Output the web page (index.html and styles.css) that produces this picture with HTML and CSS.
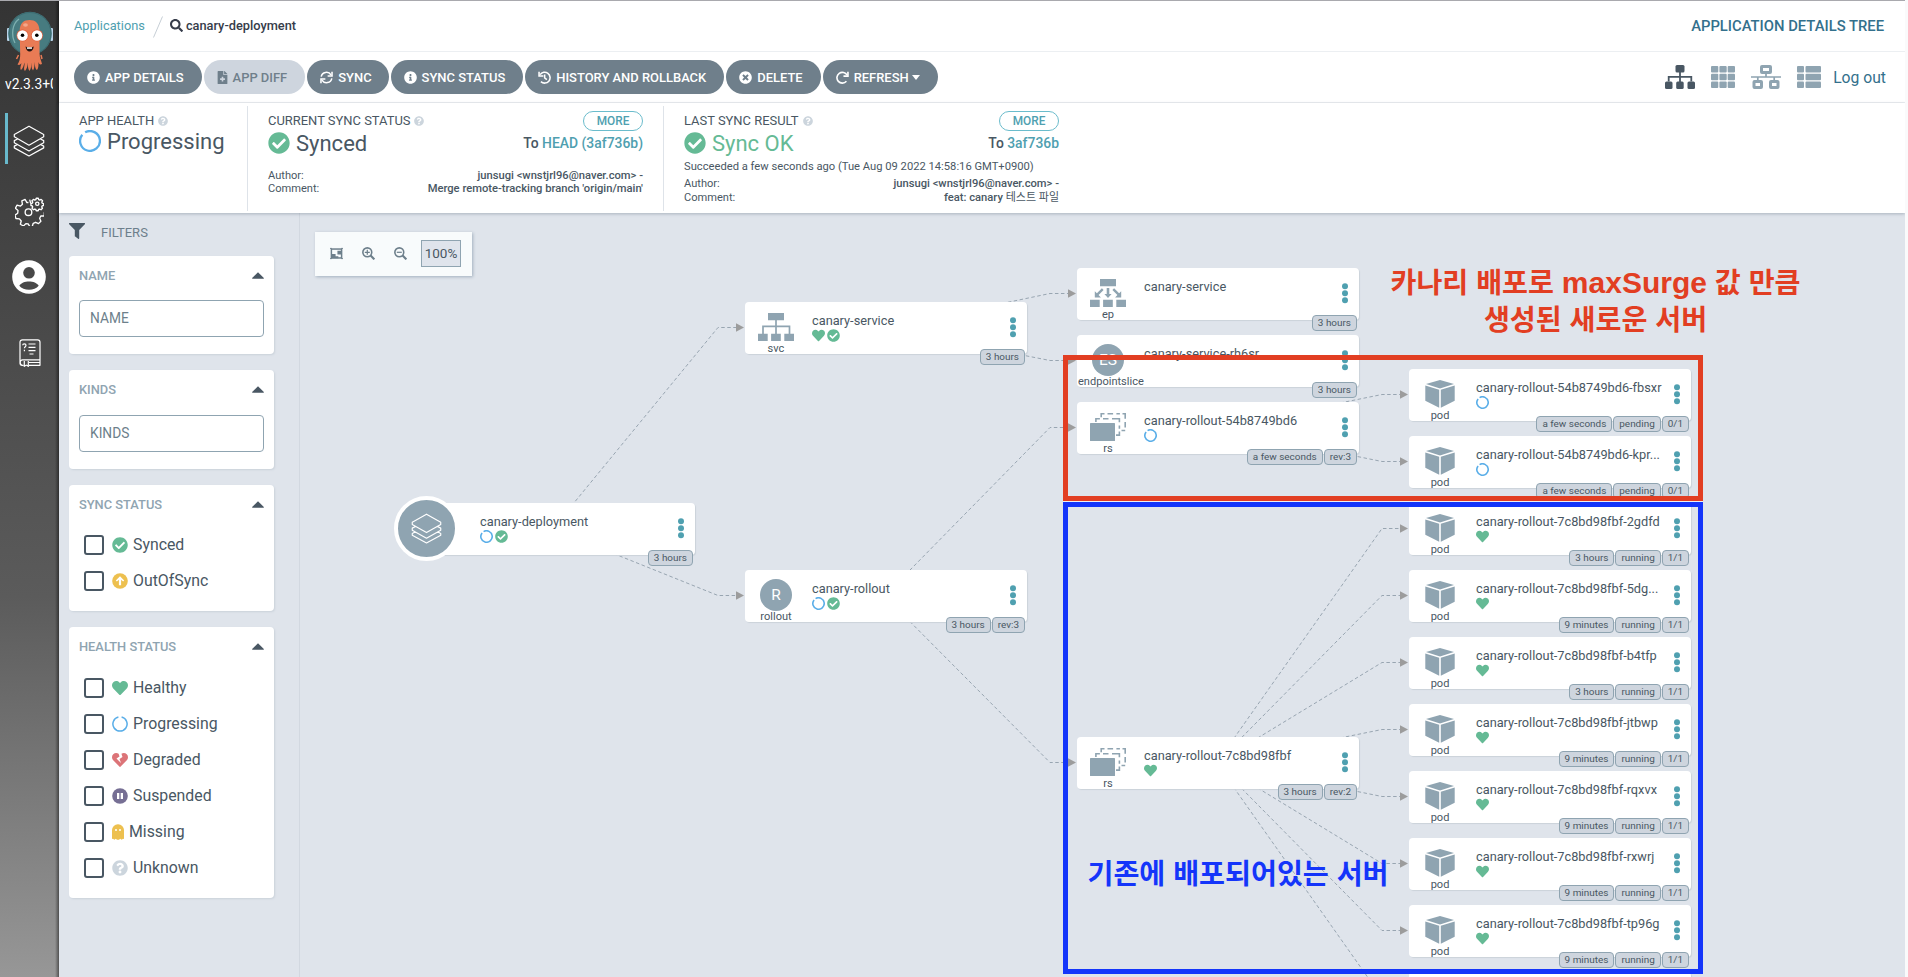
FILE: index.html
```html
<!DOCTYPE html>
<html lang="ko">
<head>
<meta charset="utf-8">
<title>canary-deployment - Application Details Tree</title>
<link rel="stylesheet" href="styles.css">
</head>
<body>
<svg class="defs" width="0" height="0" aria-hidden="true">
  <symbol id="check" viewBox="0 0 512 512"><path fill="currentColor" d="M504 256c0 136.967-111.033 248-248 248S8 392.967 8 256 119.033 8 256 8s248 111.033 248 248zM227.314 387.314l184-184c6.248-6.248 6.248-16.379 0-22.627l-22.627-22.627c-6.248-6.249-16.379-6.249-22.628 0L216 308.118l-70.059-70.059c-6.248-6.248-16.379-6.248-22.628 0l-22.627 22.627c-6.248 6.248-6.248 16.379 0 22.627l104 104c6.249 6.249 16.379 6.249 22.628.001z"/></symbol>
  <symbol id="heart" viewBox="0 0 512 512"><path fill="currentColor" d="M462.3 62.6C407.5 15.9 326 24.3 275.7 76.2L256 96.5l-19.7-20.3C186.1 24.3 104.5 15.9 49.7 62.6c-62.8 53.6-66.1 149.8-9.9 207.9l193.5 199.8c12.5 12.9 32.8 12.9 45.3 0l193.5-199.8c56.3-58.1 53-154.3-9.8-207.9z"/></symbol>
  <symbol id="broken" viewBox="0 0 512 512"><path fill="currentColor" d="M473.7 73.8l-2.4-2.5c-46-47-118-51.7-169.6-14.8L336 159.9l-96 64 48 128-144-144 96-64-28.6-86.5C159.7 19.6 87 24 40.7 71.4l-2.4 2.4C-10.4 123.6-12.5 202.9 31 256l212.1 218.6c7.1 7.3 18.6 7.3 25.7 0L481 255.9c43.5-53 41.4-132.3-7.3-182.1z"/></symbol>
  <symbol id="ring" viewBox="0 0 22 22"><path fill="none" stroke="currentColor" stroke-width="2.3" d="M6.6 2.1A9.9 9.9 0 1 1 3.6 4.4" transform="rotate(-3 11 11)"/></symbol>
  <symbol id="ring-top" viewBox="0 0 16 16"><path fill="none" stroke="currentColor" stroke-width="1.5" d="M9.6 1.1A7.1 7.1 0 1 1 6.4 1.1"/></symbol>
  <symbol id="ring-small" viewBox="0 0 13 13"><path fill="none" stroke="currentColor" stroke-width="1.6" d="M3.6 1.6A5.7 5.7 0 1 1 2.1 2.9"/></symbol>
  <symbol id="question" viewBox="0 0 512 512"><path fill="currentColor" d="M504 256c0 136.997-111.043 248-248 248S8 392.997 8 256C8 119.083 119.043 8 256 8s248 111.083 248 248zM262.655 90c-54.497 0-89.255 22.957-116.549 63.758-3.536 5.286-2.353 12.415 2.715 16.258l34.699 26.31c5.205 3.947 12.621 3.008 16.665-2.122 17.864-22.658 30.113-35.797 57.303-35.797 20.429 0 45.698 13.148 45.698 32.958 0 14.976-12.363 22.667-32.534 33.976C247.128 238.528 216 254.941 216 296v4c0 6.627 5.373 12 12 12h56c6.627 0 12-5.373 12-12v-1.333c0-28.462 83.186-29.647 83.186-106.667 0-58.002-60.165-102-116.531-102zM256 338c-25.365 0-46 20.635-46 46 0 25.364 20.635 46 46 46s46-20.636 46-46c0-25.365-20.635-46-46-46z"/></symbol>
  <symbol id="info" viewBox="0 0 512 512"><path fill="currentColor" d="M256 8C119.043 8 8 119.083 8 256c0 136.997 111.043 248 248 248s248-111.003 248-248C504 119.083 392.957 8 256 8zm0 110c23.196 0 42 18.804 42 42s-18.804 42-42 42-42-18.804-42-42 18.804-42 42-42zm56 254c0 6.627-5.373 12-12 12h-88c-6.627 0-12-5.373-12-12v-24c0-6.627 5.373-12 12-12h12v-64h-12c-6.627 0-12-5.373-12-12v-24c0-6.627 5.373-12 12-12h64c6.627 0 12 5.373 12 12v100h12c6.627 0 12 5.373 12 12v24z"/></symbol>
  <symbol id="times" viewBox="0 0 512 512"><path fill="currentColor" d="M256 8C119 8 8 119 8 256s111 248 248 248 248-111 248-248S393 8 256 8zm121.600 313.100c4.700 4.700 4.700 12.300 0 17L338 377.600c-4.700 4.700-12.300 4.700-17 0L256 312l-65.100 65.600c-4.700 4.700-12.300 4.700-17 0L134.400 338c-4.700-4.700-4.700-12.300 0-17l65.600-65-65.600-65.100c-4.700-4.700-4.700-12.300 0-17l39.600-39.600c4.700-4.700 12.300-4.700 17 0l65 65.700 65.100-65.600c4.700-4.700 12.300-4.700 17 0l39.600 39.600c4.700 4.700 4.700 12.300 0 17L312 256l65.600 65.100z"/></symbol>
  <symbol id="search" viewBox="0 0 512 512"><path fill="currentColor" d="M505 442.700L405.300 343c-4.500-4.500-10.600-7-17-7H372c27.600-35.300 44-79.700 44-128C416 93.100 322.900 0 208 0S0 93.100 0 208s93.100 208 208 208c48.300 0 92.700-16.400 128-44v16.300c0 6.400 2.500 12.500 7 17l99.700 99.700c9.400 9.400 24.600 9.400 33.900 0l28.300-28.300c9.400-9.400 9.400-24.600.1-34zM208 336c-70.700 0-128-57.200-128-128 0-70.700 57.200-128 128-128 70.700 0 128 57.200 128 128 0 70.700-57.200 128-128 128z"/></symbol>
  <symbol id="file" viewBox="-64 0 512 512"><path fill="currentColor" d="M377 105L279.100 7c-4.500-4.500-10.600-7-17-7H256v128h128v-6.100c0-6.300-2.500-12.400-7-16.900zm-153 31V0H24C10.700 0 0 10.700 0 24v464c0 13.300 10.700 24 24 24h336c13.300 0 24-10.700 24-24V160H248c-13.200 0-24-10.800-24-24zm64 160v48c0 4.400-3.600 8-8 8h-56v56c0 4.400-3.600 8-8 8h-48c-4.400 0-8-3.600-8-8v-56h-56c-4.400 0-8-3.600-8-8v-48c0-4.400 3.600-8 8-8h56v-56c0-4.400 3.600-8 8-8h48c4.400 0 8 3.600 8 8v56h56c4.400 0 8 3.600 8 8z"/></symbol>
  <symbol id="sync" viewBox="0 0 16 16"><g fill="none" stroke="currentColor" stroke-width="1.9"><path d="M1.500 7A6.500 6.500 0 0 1 13.500 4.800M14.500 9A6.500 6.500 0 0 1 2.500 11.200"/><path d="M14.800.8v5.400H9.400M1.200 15.200V9.800h5.400"/></g></symbol>
  <symbol id="history" viewBox="0 0 16 16"><g fill="none" stroke="currentColor" stroke-width="1.900"><path d="M2.600 4.500A6.700 6.700 0 1 1 3.600 13.100"/><path d="M1.300.8v5.300h5.300M8.200 4.300v4.200l2.700 2"/></g></symbol>
  <symbol id="redo" viewBox="0 0 16 16"><g fill="none" stroke="currentColor" stroke-width="2"><path d="M13.600 5.200A6.600 6.600 0 1 0 12.800 12.500"/><path d="M14.700.8v5.500H9.200"/></g></symbol>
  <symbol id="up" viewBox="0 0 16 16"><circle cx="8" cy="8" r="7.800" fill="currentColor"/><path fill="#fff" d="M8 3.300l4.200 4.200-1.100 1.100-2-1.800v5.400H6.900V6.800l-2 1.800-1.100-1.100z"/></symbol>
  <symbol id="pause" viewBox="0 0 16 16"><circle cx="8" cy="8" r="7.800" fill="currentColor"/><path fill="#fff" d="M5 5h2.300v6H5zM8.700 5H11v6H8.700z"/></symbol>
  <symbol id="ghost" viewBox="0 0 12 16"><path fill="currentColor" d="M6 .2a5.900 5.900 0 0 0-6 5.900v9l1-.3 1.300 1 1.500-1.100L5 15.800h2l1.200-1.100 1.500 1.100 1.300-1 1 .3v-9A5.900 5.900 0 0 0 6 .2z"/><circle cx="4" cy="6" r="1" fill="#fff"/><circle cx="8" cy="6" r="1" fill="#fff"/></symbol>
  <symbol id="layers" viewBox="0 0 32 32"><g fill="none" stroke="currentColor" stroke-width="1.200" stroke-linejoin="round"><path d="M16 1.200L30.700 9.600v2.200L16 20.200 1.300 11.800V9.600zM1.300 11v1M4.600 14l-3.300 1.600v2.200L16 26l14.700-8.200v-2.200L27.400 14M4.600 19.400l-3.300 1.700v1.800L16 31l14.700-8.100v-1.800l-3.300-1.700"/></g></symbol>
  <symbol id="caret" viewBox="0 0 12 7"><path fill="currentColor" d="M6 .2l5.600 5.500c.5.500.2 1.100-.4 1.100H.8c-.6 0-.9-.6-.4-1.100z"/></symbol>
  <symbol id="kind-svc" viewBox="0 0 36 28"><g fill="#8fa4b1"><path d="M10 0h16v7.300H10zM0 20.800h9.700V28H0zM13.100 20.800h9.700V28h-9.700zM26.300 20.800H36V28h-9.700z"/><path fill="none" stroke="#8fa4b1" stroke-width="1.700" d="M18 7v14M5 21v-7.600h26.500V21"/></g></symbol>
  <symbol id="kind-ep" viewBox="0 0 36 28"><g fill="#8fa4b1"><path d="M10 0h16v7.300H10zM0 20.800h9.700V28H0zM13.100 20.800h9.700V28h-9.700zM26.300 20.800H36V28h-9.700z"/><path d="M4.800 18.400v-6.200l2.100 2 5-4.900 1.700 1.700-5 4.900 2.300 2.500zM31.200 18.400v-6.200l-2.100 2-5-4.900-1.700 1.700 5 4.900-2.300 2.500zM18 19l-3.600-4h2.300V9h2.600v6h2.300z"/></g></symbol>
  <symbol id="kind-rs" viewBox="0 0 36 28"><rect y="9.900" width="25" height="18.100" rx=".6" fill="#8fa4b1"/><g fill="none" stroke="#8fa4b1" stroke-width="1.600"><path d="M5.900 9V5.800h4M13 5.800h5.500M22 5.800h7.400v3.400M29.400 12.500v3.300M29.400 18.500v3.600H26"/><path d="M11.200 4.200V.8h3.300M17.500.8h5.600M26.400.8h3.500M32.500.8h2.700v5M35.200 9v5.500M35.200 17.500h-3.700"/></g></symbol>
  <symbol id="kind-pod" viewBox="0 0 30 28"><path fill="#8fa4b1" d="M15 0l14 4-14 4.500L1 4zM.3 5.400L14.200 9.700v18.100L.3 20.800zM29.700 5.400L15.800 9.700v18.100l13.900-7z"/></symbol>
</svg>

<div class="app">
  <nav class="sidebar">
    <svg class="logo" viewBox="0 0 46 60">
      <rect x="0" y="17" width="2.800" height="13" rx="1" fill="#b9d3e8"/><rect x="43.200" y="17" width="2.800" height="13" rx="1" fill="#b9d3e8"/>
      <circle cx="23" cy="22.500" r="21.700" fill="#477b80"/><circle cx="23" cy="22.500" r="21" fill="none" stroke="#3b6a70" stroke-width="1"/>
      <path d="M8 32C4 24 5 13 12 8" fill="none" stroke="#7fb0b0" stroke-width="1.300"/>
      <path d="M12.700 20C12.700 12 17 9 22.500 9s10 3 10 11v22c0 5 2 8 2.500 11-2 1-3 0-3.500-2 0 4 0 6-1.500 8-2-1-2-5-2.500-8 0 4 0 6-1.500 8.500-1.700-2-1.500-5-1.700-8-.3 3 .2 6-1.800 8.500-2-2.500-1.500-5.500-1.500-8.500-.5 3-.8 6-3 8.500-2-2 0-5-.5-8.500-.5 2-1.500 6-3.500 7.500-1.500-2 .5-5 .3-7-.5 1.500-2 2.500-3.800 1.500 2-3 2.700-6 2.700-10z" fill="#e97b55"/>
      <path d="M11.500 44l-2 4M34 44l1 4" stroke="#e97b55" stroke-width="1.500"/>
      <ellipse cx="18.500" cy="14" rx="2.400" ry="1.800" fill="#f4a88b"/>
      <circle cx="15.500" cy="24.500" r="6" fill="#e0603f"/><circle cx="30" cy="24.500" r="6" fill="#e0603f"/>
      <circle cx="15.500" cy="24.500" r="5.300" fill="#fff"/><circle cx="30" cy="24.500" r="5.300" fill="#fff"/><circle cx="15.500" cy="24.200" r="1.800"/><circle cx="29.800" cy="24.200" r="1.800"/>
      <path d="M18.500 35.500q4.200 2 8.300 0-1 5-4.200 5-3.200 0-4.100-5z" fill="#241715"/><path d="M20 36.300h5v1.500h-5z" fill="#fff"/>
    </svg>
    <div class="version">v2.3.3+0</div>
    <div class="nav-item nav-active"><svg width="32" height="32"><use href="#layers"/></svg></div>
    <svg class="nav-gear" viewBox="0 0 28 28"><g fill="none" stroke="#fff" stroke-width="1.300" stroke-linejoin="round">
      <path d="M15.600 5.800l-.6-.2-.8-3M13 5.300l-1.500.1-1.700-3-3.200 1.300.6 3.400-1.900 1.700-3.300-1-1.600 3 2.500 2.200-.3 2.700-2.600 1.800.9 3.300 3.400.3 1.700 2.100-.8 3.100 3 1.700 2.300-2.300 2.200.2 1.600 2.700h2.300l1-3.200 2.300-1 2.800 1.300 2.300-2.200-1.200-3 1.100-2.200h3.400v-3.600"/>
      <circle cx="13" cy="14.700" r="3.200"/><circle cx="21.500" cy="6.500" r="1.600"/>
      <path d="M20.500 1.200h2l.4 1.400 1 .4 1.300-.7 1.400 1.400-.7 1.300.4 1 1.200.4v1.800l-1.300.4-.4 1 .7 1.300-1.400 1.400-1.300-.7-1 .4-.4 1.300h-1.900l-.4-1.300-1-.4-1.300.7-1.400-1.400.7-1.300-.4-1-1.300-.4V6.400l1.300-.4.4-1-.7-1.300 1.400-1.400 1.300.7 1-.4z"/></g></svg>
    <svg class="nav-user" viewBox="0 0 34 34"><circle cx="17" cy="17" r="16.800" fill="#fff"/><circle cx="17" cy="12.800" r="5.800" fill="#484848"/><path d="M7.300 25.800c1.500-2.800 5.700-4.300 9.700-4.300s8.200 1.500 9.700 4.300c-2 2.500-5.800 4-9.700 4s-7.700-1.500-9.700-4z" fill="#484848"/></svg>
    <svg class="nav-doc" viewBox="0 0 22 28"><g fill="none" stroke="#fff" stroke-width="1.200"><path d="M4.500 26.300H3a2 2 0 0 1-2-2V3.200A2.400 2.400 0 0 1 3.400.8h15.200A2.400 2.400 0 0 1 21 3.200v17.600H3.500C.5 20.800.5 26.300 3.500 26.300M10 26.300h11M10 23.500h11M21 20.800v6M5.300 22v5.300l2-1.200 2 1.200V22"/><path d="M9.500 5h7M9.500 8.300h7M9.500 11.600h7M10.500 15h4"/><path d="M3.700 6.300c0-2 3.300-2 3.300 0 0 1.500-1.600 1.300-1.600 3M5.400 10.800v1.500"/></g></svg>
  </nav>

  <main class="main">
    <header class="crumbs">
      <a class="crumb-link">Applications</a>
      <svg class="slash" viewBox="0 0 10 22"><path d="M.5 21.500L9.500.5" stroke="#c6ced6"/></svg>
      <svg class="crumb-search"><use href="#search"/></svg>
      <span class="crumb-name">canary-deployment</span>
      <span class="page-title">APPLICATION DETAILS TREE</span>
    </header>
    <div class="actions">
      <button class="btn"><svg><use href="#info"/></svg>APP DETAILS</button>
      <button class="btn btn-off"><svg><use href="#file"/></svg>APP DIFF</button>
      <button class="btn btn-tight"><svg><use href="#sync"/></svg>SYNC</button>
      <button class="btn"><svg><use href="#info"/></svg>SYNC STATUS</button>
      <button class="btn"><svg><use href="#history"/></svg>HISTORY AND ROLLBACK</button>
      <button class="btn"><svg><use href="#times"/></svg>DELETE</button>
      <button class="btn"><svg><use href="#redo"/></svg>REFRESH<i class="drop"></i></button>
      <div class="views">
        <svg class="view-on" width="30" height="24" viewBox="0 0 30 24"><g fill="#495763"><rect x="10.500" width="9" height="7.500" rx="1.500"/><rect y="16.500" width="7.500" height="7.500" rx="1.500"/><rect x="11.200" y="16.500" width="7.500" height="7.500" rx="1.500"/><rect x="22.500" y="16.500" width="7.500" height="7.500" rx="1.500"/></g><path d="M15 7v10M3.700 16.500v-4.700h22.600v4.700" fill="none" stroke="#495763" stroke-width="1.800"/></svg>
        <svg width="24" height="22" viewBox="0 0 24 22"><g fill="#8fa4b1"><rect width="7.300" height="6.500" rx="1"/><rect x="8.400" width="7.300" height="6.500" rx="1"/><rect x="16.700" width="7.300" height="6.500" rx="1"/><rect y="7.700" width="7.300" height="6.500" rx="1"/><rect x="8.400" y="7.700" width="7.300" height="6.500" rx="1"/><rect x="16.700" y="7.700" width="7.300" height="6.500" rx="1"/><rect y="15.400" width="7.300" height="6.500" rx="1"/><rect x="8.400" y="15.400" width="7.300" height="6.500" rx="1"/><rect x="16.700" y="15.400" width="7.300" height="6.500" rx="1"/></g></svg>
        <svg width="30" height="24" viewBox="0 0 30 24"><g fill="none" stroke="#8fa4b1"><g stroke-width="3"><rect x="10.500" y="1.500" width="9" height="6" rx=".5"/><rect x="3" y="16.500" width="7.500" height="6" rx=".5"/><rect x="19.500" y="16.500" width="7.500" height="6" rx=".5"/></g><path d="M0 12h30M15 8v4M6.800 12v4M23.200 12v4" stroke-width="1.700"/></g></svg>
        <svg width="24" height="22" viewBox="0 0 24 22"><g fill="#8fa4b1"><rect width="7" height="6.500" rx="1"/><rect x="8.500" width="15.500" height="6.500" rx="1"/><rect y="7.700" width="7" height="6.500" rx="1"/><rect x="8.500" y="7.700" width="15.500" height="6.500" rx="1"/><rect y="15.400" width="7" height="6.500" rx="1"/><rect x="8.500" y="15.400" width="15.500" height="6.500" rx="1"/></g></svg>
      </div>
      <a class="logout">Log out</a>
    </div>

    <section class="status">
      <div class="stat stat-health">
        <div class="stat-head">APP HEALTH<svg><use href="#question"/></svg></div>
        <div class="stat-value"><svg class="blue"><use href="#ring"/></svg>Progressing</div>
      </div>
      <div class="stat">
        <div class="stat-head">CURRENT SYNC STATUS<svg><use href="#question"/></svg><button class="more">MORE</button></div>
        <div class="stat-value stat-lower"><svg class="green"><use href="#check"/></svg>Synced<span class="target">To <a>HEAD (3af736b)</a></span></div>
        <dl class="commit commit-one"><dt>Author:</dt><dd>junsugi &lt;wnstjrl96@naver.com&gt; -</dd><dt>Comment:</dt><dd>Merge remote-tracking branch 'origin/main'</dd></dl>
      </div>
      <div class="stat stat-last">
        <div class="stat-head">LAST SYNC RESULT<svg><use href="#question"/></svg><button class="more">MORE</button></div>
        <div class="stat-value stat-lower green"><svg><use href="#check"/></svg>Sync OK<span class="target">To <a>3af736b</a></span></div>
        <p class="when">Succeeded a few seconds ago (Tue Aug 09 2022 14:58:16 GMT+0900)</p>
        <dl class="commit commit-two"><dt>Author:</dt><dd>junsugi &lt;wnstjrl96@naver.com&gt; -</dd><dt>Comment:</dt><dd>feat: canary <span class="ko">테스트 파일</span></dd></dl>
      </div>
    </section>

    <div class="content">
      <aside class="filters">
        <div class="filters-head"><svg viewBox="0 0 16 16"><path fill="#495763" d="M.6 0h14.800c.6 0 .9.700.4 1.200L10.200 7v8.300c0 .6-.6.900-1.100.5L6.200 13.600a.9.900 0 0 1-.4-.7V7L.2 1.200C-.3.7 0 0 .6 0z"/></svg><span>FILTERS</span></div>
        <section class="card card-name"><h3>NAME<svg><use href="#caret"/></svg></h3><input placeholder="NAME"></section>
        <section class="card card-kinds"><h3>KINDS<svg><use href="#caret"/></svg></h3><input placeholder="KINDS"></section>
        <section class="card"><h3>SYNC STATUS<svg><use href="#caret"/></svg></h3>
          <ul>
            <li><i class="box"></i><svg class="green"><use href="#check"/></svg><span>Synced</span></li>
            <li><i class="box"></i><svg class="yellow"><use href="#up"/></svg><span>OutOfSync</span></li>
          </ul></section>
        <section class="card"><h3>HEALTH STATUS<svg><use href="#caret"/></svg></h3>
          <ul class="health-list">
            <li><i class="box"></i><svg class="green"><use href="#heart"/></svg><span>Healthy</span></li>
            <li><i class="box"></i><svg class="blue"><use href="#ring-top"/></svg><span>Progressing</span></li>
            <li><i class="box"></i><svg class="red"><use href="#broken"/></svg><span>Degraded</span></li>
            <li><i class="box"></i><svg class="purple"><use href="#pause"/></svg><span>Suspended</span></li>
            <li><i class="box"></i><svg class="yellow narrow"><use href="#ghost"/></svg><span>Missing</span></li>
            <li><i class="box"></i><svg class="pale"><use href="#question"/></svg><span>Unknown</span></li>
          </ul></section>
      </aside>
      <div class="canvas" id="canvas">
        <svg class="edges" id="edges" width="1608" height="764" viewBox="297 213 1608 764"></svg>
        <div class="zoombar">
          <svg viewBox="0 0 14 12"><g fill="none" stroke="#6d7f8b"><rect x="1.500" y="1.200" width="11" height="9.600" stroke-width="1.600"/><path d="M0 .5h2M12 .5h2M0 11.500h2M12 11.500h2"/></g><path fill="#6d7f8b" d="M1.500 6.500H6V9h3v2H1.500zM8 3h4v4H8z"/></svg>
          <svg viewBox="0 0 14 14"><g fill="none" stroke="#6d7f8b"><circle cx="5.700" cy="5.700" r="4.800" stroke-width="1.700"/><path d="M3 5.700h5.400M5.700 3v5.400" stroke-width="1.300"/><path d="M9 9l4.300 4.300" stroke-width="2.300"/></g></svg>
          <svg viewBox="0 0 14 14"><g fill="none" stroke="#6d7f8b"><circle cx="5.700" cy="5.700" r="4.800" stroke-width="1.700"/><path d="M3 5.700h5.400" stroke-width="1.300"/><path d="M9 9l4.300 4.300" stroke-width="2.300"/></g></svg>
          <span class="percent">100%</span>
        </div>
        <div class="mark mark-red"></div>
        <div class="mark mark-blue"></div>
        <p class="note note-red">카나리 배포로 <b>maxSurge</b> 값 만큼<br>생성된 새로운 서버</p>
        <p class="note note-blue">기존에 배포되어있는 서버</p>
      </div>
    </div>
  </main>
</div>
<script src="graph.js"></script>
</body>
</html>
```
FILE: styles.css
```css
* { box-sizing: border-box; }
body { margin: 0; background: #fafafb; font-family: Roboto, "Noto Sans CJK KR", sans-serif; color: #495763; overflow: hidden; }
.defs { position: absolute; }
svg { display: block; flex: none; }
button { font-family: inherit; }
.app { display: flex; width: 1905px; height: 977px; overflow: hidden; border-top: 1px solid #a9a9ae; }
.green { color: #65ba95; }
.blue { color: #5aaee8; }
.yellow { color: #edc04f; }
.red { color: #dc7478; }
.purple { color: #766f94; }
.pale { color: #ccd5dd; }

.sidebar { flex: none; width: 59px; display: flex; flex-direction: column; align-items: center; color: #fff; padding-right: 1px;
  background: linear-gradient(to right, transparent 55px, rgba(0,0,0,.45) 59px), linear-gradient(#343434, #424242 22%, #5b5b5b 61%, #979797); }
.logo { width: 46px; height: 60px; margin-top: 10px; margin-left: 1px; }
.version { width: 48px; height: 18px; margin: 4px 0 0; overflow: hidden; white-space: nowrap; font-size: 13.8px; line-height: 18px; }
.nav-item { width: 58px; height: 51px; margin-top: 20px; display: flex; align-items: center; }
.nav-active { width: 53px; margin-left: 5px; border-left: 3px solid #68b9cc; padding: 5px 0 0 5px; }
.nav-gear { width: 29px; height: 29px; margin-top: 33px; }
.nav-user { width: 34px; height: 34px; margin-top: 34px; }
.nav-doc { width: 22px; height: 28px; margin-top: 45px; margin-left: 1px; }

.main { flex: 1; min-width: 0; display: flex; flex-direction: column; background: #fff; }
.crumbs { height: 51px; flex: none; border-bottom: 1px solid #eceff2; display: flex; align-items: center; padding: 0 21px 1px 15px; font-size: 12.8px; }
.crumb-link { color: #4fa0b0; }
.slash { width: 10px; height: 22px; margin: 2px 7px 0 8px; }
.crumb-search { width: 13px; height: 13px; color: #363c4a; margin-right: 3px; }
.crumb-name { font-weight: 500; color: #363c4a; }
.page-title { margin-left: auto; font-size: 14.8px; font-weight: 500; color: #33708c; }
.actions { height: 51px; flex: none; border-bottom: 1px solid #eceff2; display: flex; align-items: center; gap: 2px; padding: 0 19px 0 15px; }
.btn { height: 34px; border: 0; border-radius: 17px; padding: 0 18px 0 13px; display: flex; align-items: center; gap: 5px; background: #6f7f8b; color: #fff; font-size: 12.95px; font-weight: 500; white-space: nowrap; }
.btn svg { width: 13px; height: 13px; }
.btn-off { background: #ced5de; color: #6f7f8b; }
.btn-off svg { margin: 0 -1px; }
.btn-tight { padding-right: 17px; }
.drop { border: 4px solid transparent; border-top: 5px solid #fff; border-bottom: 0; margin-left: -2px; }
.views { margin-left: auto; display: flex; align-items: center; gap: 16px; }
.logout { margin-left: 10px; font-size: 15.7px; color: #33708c; }

.status { height: 110px; flex: none; display: flex; padding-top: 3px; position: relative; z-index: 2; box-shadow: 0 1px 3px rgba(70,90,110,.35); background: #fff; }
.stat { width: 416px; height: 105px; padding: 5px 20px 0 20px; border-right: 1px solid #dee3e9; font-size: 12.95px; }
.stat-health { width: 189px; }
.stat-last { border: 0; }
.stat-head { height: 20px; display: flex; align-items: center; line-height: 14px; padding-bottom: 1px; }
.stat-head svg { width: 10px; height: 10px; margin-left: 4px; color: #ccd5dd; }
.more { margin: 1px 0 0 auto; width: 60px; height: 20px; border: 1px solid #6bbccc; border-radius: 10px; background: none; color: #4fa0b0; font-size: 11.85px; font-weight: 500; padding: 0; flex: none; }
.stat-last .more { margin-right: 1px; }
.stat-value { height: 24px; display: flex; align-items: center; font-size: 22px; margin-top: -2px; }
.stat-value svg { width: 22px; height: 22px; margin-right: 6px; }
.stat-lower { margin-top: 0; }
.target { margin-left: auto; font-size: 13.9px; font-weight: 500; color: #495763; }
.stat-last .target { margin-right: 1px; }
.target a { color: #4fa0b0; }
.when { margin: 5px 0 3px; font-size: 11.2px; line-height: 14px; white-space: nowrap; }
.commit { margin: 0; display: grid; grid-template-columns: 60px 1fr; font-size: 11.2px; line-height: 13px; }
.commit-one { margin-top: 14px; }
.commit-two { line-height: 13.8px; padding-right: 1px; }
.commit dt { font-size: 11.08px; }
.commit dd { margin: 0; text-align: right; font-weight: 500; white-space: nowrap; }
.ko { font-size: 11px; font-weight: 400; line-height: 1; }

.content { flex: 1; display: flex; background: #dfe4eb; min-height: 0; }
.filters { width: 241px; flex: none; border-right: 1px solid #d2d8e0; padding: 10px 25px 0 10px; display: flex; flex-direction: column; }
.filters-head { display: flex; align-items: center; height: 16px; font-size: 13px; color: #6d7f8b; gap: 16px; margin-bottom: 17px; }
.filters-head span { padding-top: 2px; }
.filters-head svg { width: 16px; height: 16px; }
.card { background: #fff; border-radius: 4px; box-shadow: 1px 1px 2px #cbd2da; margin-bottom: 16px; padding: 10px 10px 12px; flex: none; }
.card h3 { margin: 0; display: flex; justify-content: space-between; align-items: center; height: 19px; font-size: 12.85px; font-weight: 500; color: #8fa4b1; }
.card h3 svg { width: 12px; height: 7px; color: #495763; }
.card-name { height: 98px; }
.card-kinds { height: 99px; }
.card input { display: block; width: 185px; height: 37px; margin-top: 15px; border: 1px solid #8fa4b1; border-radius: 4px; padding: 0 10px 1px; font: 13.75px Roboto, sans-serif; background: #fff; }
.card-kinds input { margin-top: 16px; }
.card input::placeholder { color: #6d7f8b; opacity: 1; }
.card ul { list-style: none; margin: 13px 0 0; padding: 0 0 0 5px; }
.card .health-list { margin-top: 14px; }
.card li { height: 36px; display: flex; align-items: center; font-size: 15.85px; }
.card li span { padding-bottom: 2px; }
.card li svg { width: 16px; height: 16px; margin: 0 5px 1px 0; }
.card li .narrow { width: 12px; }
.box { width: 20px; height: 20px; border: 2px solid #495763; border-radius: 3px; margin-right: 8px; }
.card:last-child { height: 271px; }

/* Free canvas: nodes are placed at graph coordinates */
.canvas { flex: 1; position: relative; min-width: 0; overflow: hidden; }
.edges { position: absolute; left: -3px; top: 0; }
.zoombar { position: absolute; left: 15px; top: 19px; width: 157px; height: 44px; background: #f8fbfc; box-shadow: 1px 1px 3px #a3b1bf; display: flex; align-items: center; padding: 0 0 1px 15px; gap: 19px; }
.zoombar svg { width: 13px; height: 13px; }
.percent { width: 40px; height: 27px; border: 1px solid #8fa4b1; background: #dfe4ec; font-size: 13.5px; line-height: 25px; text-align: center; margin-left: -5px; }
.node { position: absolute; width: 282px; height: 52px; background: #fff; border-radius: 4px; box-shadow: 1px 1px 1px #cbd2da; display: flex; }
.kind { width: 62px; flex: none; display: flex; flex-direction: column; align-items: center; padding-top: 9px; font-size: 11.05px; line-height: 14px; }
.kind .glyph { margin: 2px 0 0; height: 28px; }
.kind span { white-space: nowrap; padding-top: 1px; }
.disc { width: 32px; height: 32px; margin-bottom: -2px; border-radius: 50%; background: #8fa4b1; color: #fff; font-size: 15.5px; line-height: 32px; text-align: center; }
.endpointslice .kind span { align-self: flex-start; padding-left: 1px; }
.label { padding: 11px 0 0 5px; font-size: 12.78px; line-height: 16px; white-space: nowrap; }
.state { display: flex; gap: 2px; margin-left: -.5px; }
.state svg { width: 13px; height: 13px; }
.dots { position: absolute; right: 11.5px; top: 15px; color: #4fa0b0; }
.tags { position: absolute; right: 2px; top: 47px; display: flex; gap: 1px; }
.tags span { height: 16px; padding: 0 5px; border: 1px solid #8fa4b1; border-radius: 4px; background: #ced5de; font-size: 9.95px; line-height: 13.5px; white-space: nowrap; }
.root .orb { position: absolute; left: -19px; top: -7px; width: 65px; height: 65px; border: 4px solid #fff; border-radius: 50%; background: #8fa4b1; color: #fff; display: flex; align-items: center; justify-content: center; }
.mark { position: absolute; left: 763px; width: 640px; border: 5px solid; }
.mark-red { top: 142px; height: 146px; border-color: #e23e22; box-shadow: 0 1px #eef0f4; }
.mark-blue { top: 289px; height: 472px; border-color: #1435fa; }
.note { position: absolute; margin: 0; font: 700 28.2px/36px "Noto Sans CJK KR", sans-serif; text-align: center; white-space: nowrap; }
.note b { font: 700 30px "Liberation Sans", sans-serif; }
.note-red { left: 1090px; width: 411px; top: 50px; color: #e23e22; }
.note-blue { left: 787px; width: 302px; top: 641px; color: #1435fa; }
```
FILE: graph.js
```js
// Offset between page coordinates and the canvas origin
const OX = 300, OY = 213;

const state = {
  heart: '<svg class="green"><use href="#heart"/></svg>',
  check: '<svg class="green"><use href="#check"/></svg>',
  ring: '<svg class="blue"><use href="#ring-small"/></svg>'
};
const pod = (y, name, tags, st) => ({ x: 1409, y, kind: 'pod', name, states: [st], tags });
const run = (y, id, age) => pod(y, 'canary-rollout-7c8bd98fbf-' + id, [age, 'running', '1/1'], 'heart');

const nodes = [
  { x: 413, y: 503, kind: 'root', name: 'canary-deployment', states: ['ring', 'check'], tags: ['3 hours'] },
  { x: 745, y: 302, kind: 'svc', name: 'canary-service', states: ['heart', 'check'], tags: ['3 hours'] },
  { x: 745, y: 570, kind: 'rollout', disc: 'R', name: 'canary-rollout', states: ['ring', 'check'], tags: ['3 hours', 'rev:3'] },
  { x: 1077, y: 268, kind: 'ep', name: 'canary-service', states: [], tags: ['3 hours'] },
  { x: 1077, y: 335, kind: 'endpointslice', disc: 'ES', name: 'canary-service-rh6sr', states: [], tags: ['3 hours'] },
  { x: 1077, y: 402, kind: 'rs', name: 'canary-rollout-54b8749bd6', states: ['ring'], tags: ['a few seconds', 'rev:3'] },
  { x: 1077, y: 737, kind: 'rs', name: 'canary-rollout-7c8bd98fbf', states: ['heart'], tags: ['3 hours', 'rev:2'] },
  pod(369, 'canary-rollout-54b8749bd6-fbsxr', ['a few seconds', 'pending', '0/1'], 'ring'),
  pod(436, 'canary-rollout-54b8749bd6-kpr...', ['a few seconds', 'pending', '0/1'], 'ring'),
  run(503, '2gdfd', '3 hours'),
  run(570, '5dg...', '9 minutes'),
  run(637, 'b4tfp', '3 hours'),
  run(704, 'jtbwp', '9 minutes'),
  run(771, 'rqxvx', '9 minutes'),
  run(838, 'rxwrj', '9 minutes'),
  run(905, 'tp96g', '9 minutes'),
  { x: 1409, y: 972, blank: true }
];
const links = [[0, 1], [0, 2], [1, 3], [1, 4], [2, 5], [2, 6], [5, 7], [5, 8],
  [6, 9], [6, 10], [6, 11], [6, 12], [6, 13], [6, 14], [6, 15], [6, 16]];

function kindHtml(n) {
  if (n.kind === 'root') return '<div class="orb"><svg width="31" height="31"><use href="#layers"/></svg></div><div class="kind"></div>';
  const glyph = n.disc ? `<div class="disc">${n.disc}</div>`
    : `<svg class="glyph" width="${n.kind === 'pod' ? 30 : 36}" height="28"><use href="#kind-${n.kind}"/></svg>`;
  return `<div class="kind">${glyph}<span>${n.kind}</span></div>`;
}

const canvas = document.getElementById('canvas');
const firstOverlay = canvas.querySelector('.zoombar');
for (const n of nodes) {
  const el = document.createElement('div');
  el.className = 'node ' + (n.kind || '');
  el.style.left = n.x - OX + 'px';
  el.style.top = n.y - OY + 'px';
  if (!n.blank) {
    el.innerHTML = kindHtml(n)
      + `<div class="label">${n.name}<div class="state">${n.states.map(s => state[s]).join('')}</div></div>`
      + '<svg class="dots" width="6" height="21"><g fill="currentColor"><circle cx="3" cy="3.200" r="3"/><circle cx="3" cy="10.200" r="3"/><circle cx="3" cy="17.200" r="3"/></g></svg>'
      + `<div class="tags">${n.tags.map(t => `<span>${t}</span>`).join('')}</div>`;
  }
  canvas.insertBefore(el, firstOverlay);
}

document.getElementById('edges').innerHTML = links.map(([a, b]) => {
  const s = nodes[a], t = nodes[b], y = t.y + 25.5;
  const edge = t.x - 27, sx = s.x + 139.5, sy = s.y + 26;
  return `<path d="M${sx} ${sy}L${edge} ${y}H${t.x - 9}" fill="none" stroke="#98a5b1" stroke-dasharray="3.500 2.500"/>`
    + `<path d="M${t.x - 9} ${y - 4.300}v8.600l8-4.300z" fill="#9c9c9c"/>`;
}).join('');
```
